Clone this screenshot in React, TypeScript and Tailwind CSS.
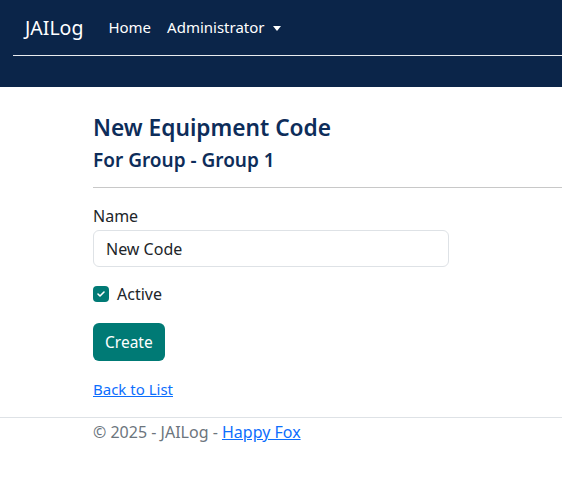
export default function App() {
  const font = { fontFamily: '"Segoe UI", "Noto Sans", "Open Sans", sans-serif' };
  return (
    <div className="min-h-screen bg-white text-[16px] text-[#212529]" style={font}>
      <header className="h-[87px] bg-[#0b2549] pl-[13px]">
        <nav className="flex h-[56px] items-center border-b border-[#e9ecef]">
          <span className="ml-[12px] text-[19.5px] text-white">JAILog</span>
          <ul className="ml-[17px] flex items-center text-[15px]">
            <li className="px-[8px] text-white">Home</li>
            <li className="flex items-center px-[8px] text-white">
              Administrator
              <span className="ml-[8px] mt-[2px] inline-block border-x-[4px] border-t-[5px] border-x-transparent border-t-white" />
            </li>
          </ul>
        </nav>
      </header>

      <main className="pl-[93px] pt-[27px]">
        <h1 className="text-[22.7px] font-semibold leading-[1.25] text-[#0d2d5a]">New Equipment Code</h1>
        <h4 className="mt-[7px] text-[19px] font-semibold leading-[1.2] text-[#0d2d5a]">For Group - Group 1</h4>
        <hr className="mt-[15px] border-t border-[#c8c8c8]" />

        <form className="w-[356px] pt-[16px]" onSubmit={(e) => e.preventDefault()}>
          <label className="mb-[2px] block leading-[24px]">Name</label>
          <input
            defaultValue="New Code"
            className="block h-[37px] w-full rounded-[6px] border border-[#dee2e6] px-[12px] text-[16px] text-[#212529] outline-none"
          />
          <label className="mt-[15px] flex items-center gap-[8px] leading-[24px]">
            <span className="flex h-[16px] w-[16px] items-center justify-center rounded-[4px] bg-[#007a75]">
              <svg width="10" height="10" viewBox="0 0 20 20" fill="none">
                <path d="M4 10l4 4 8-8" stroke="white" strokeWidth="3.2" strokeLinecap="round" strokeLinejoin="round" />
              </svg>
            </span>
            Active
          </label>
          <button className="mt-[17px] h-[38px] rounded-[6px] bg-[#007a75] px-[12px] text-[15.5px] text-white">Create</button>
        </form>

        <a href="#" className="mt-[16px] inline-block text-[15px] leading-[24px] text-[#0d6efd] underline">Back to List</a>
      </main>

      <footer className="mt-[16px] border-t border-[#dee2e6] pl-[93px] pt-[2px] leading-[24px] text-[#6c757d]">
        © 2025 - JAILog - <a href="#" className="text-[#0d6efd] underline">Happy Fox</a>
      </footer>
    </div>
  );
}
